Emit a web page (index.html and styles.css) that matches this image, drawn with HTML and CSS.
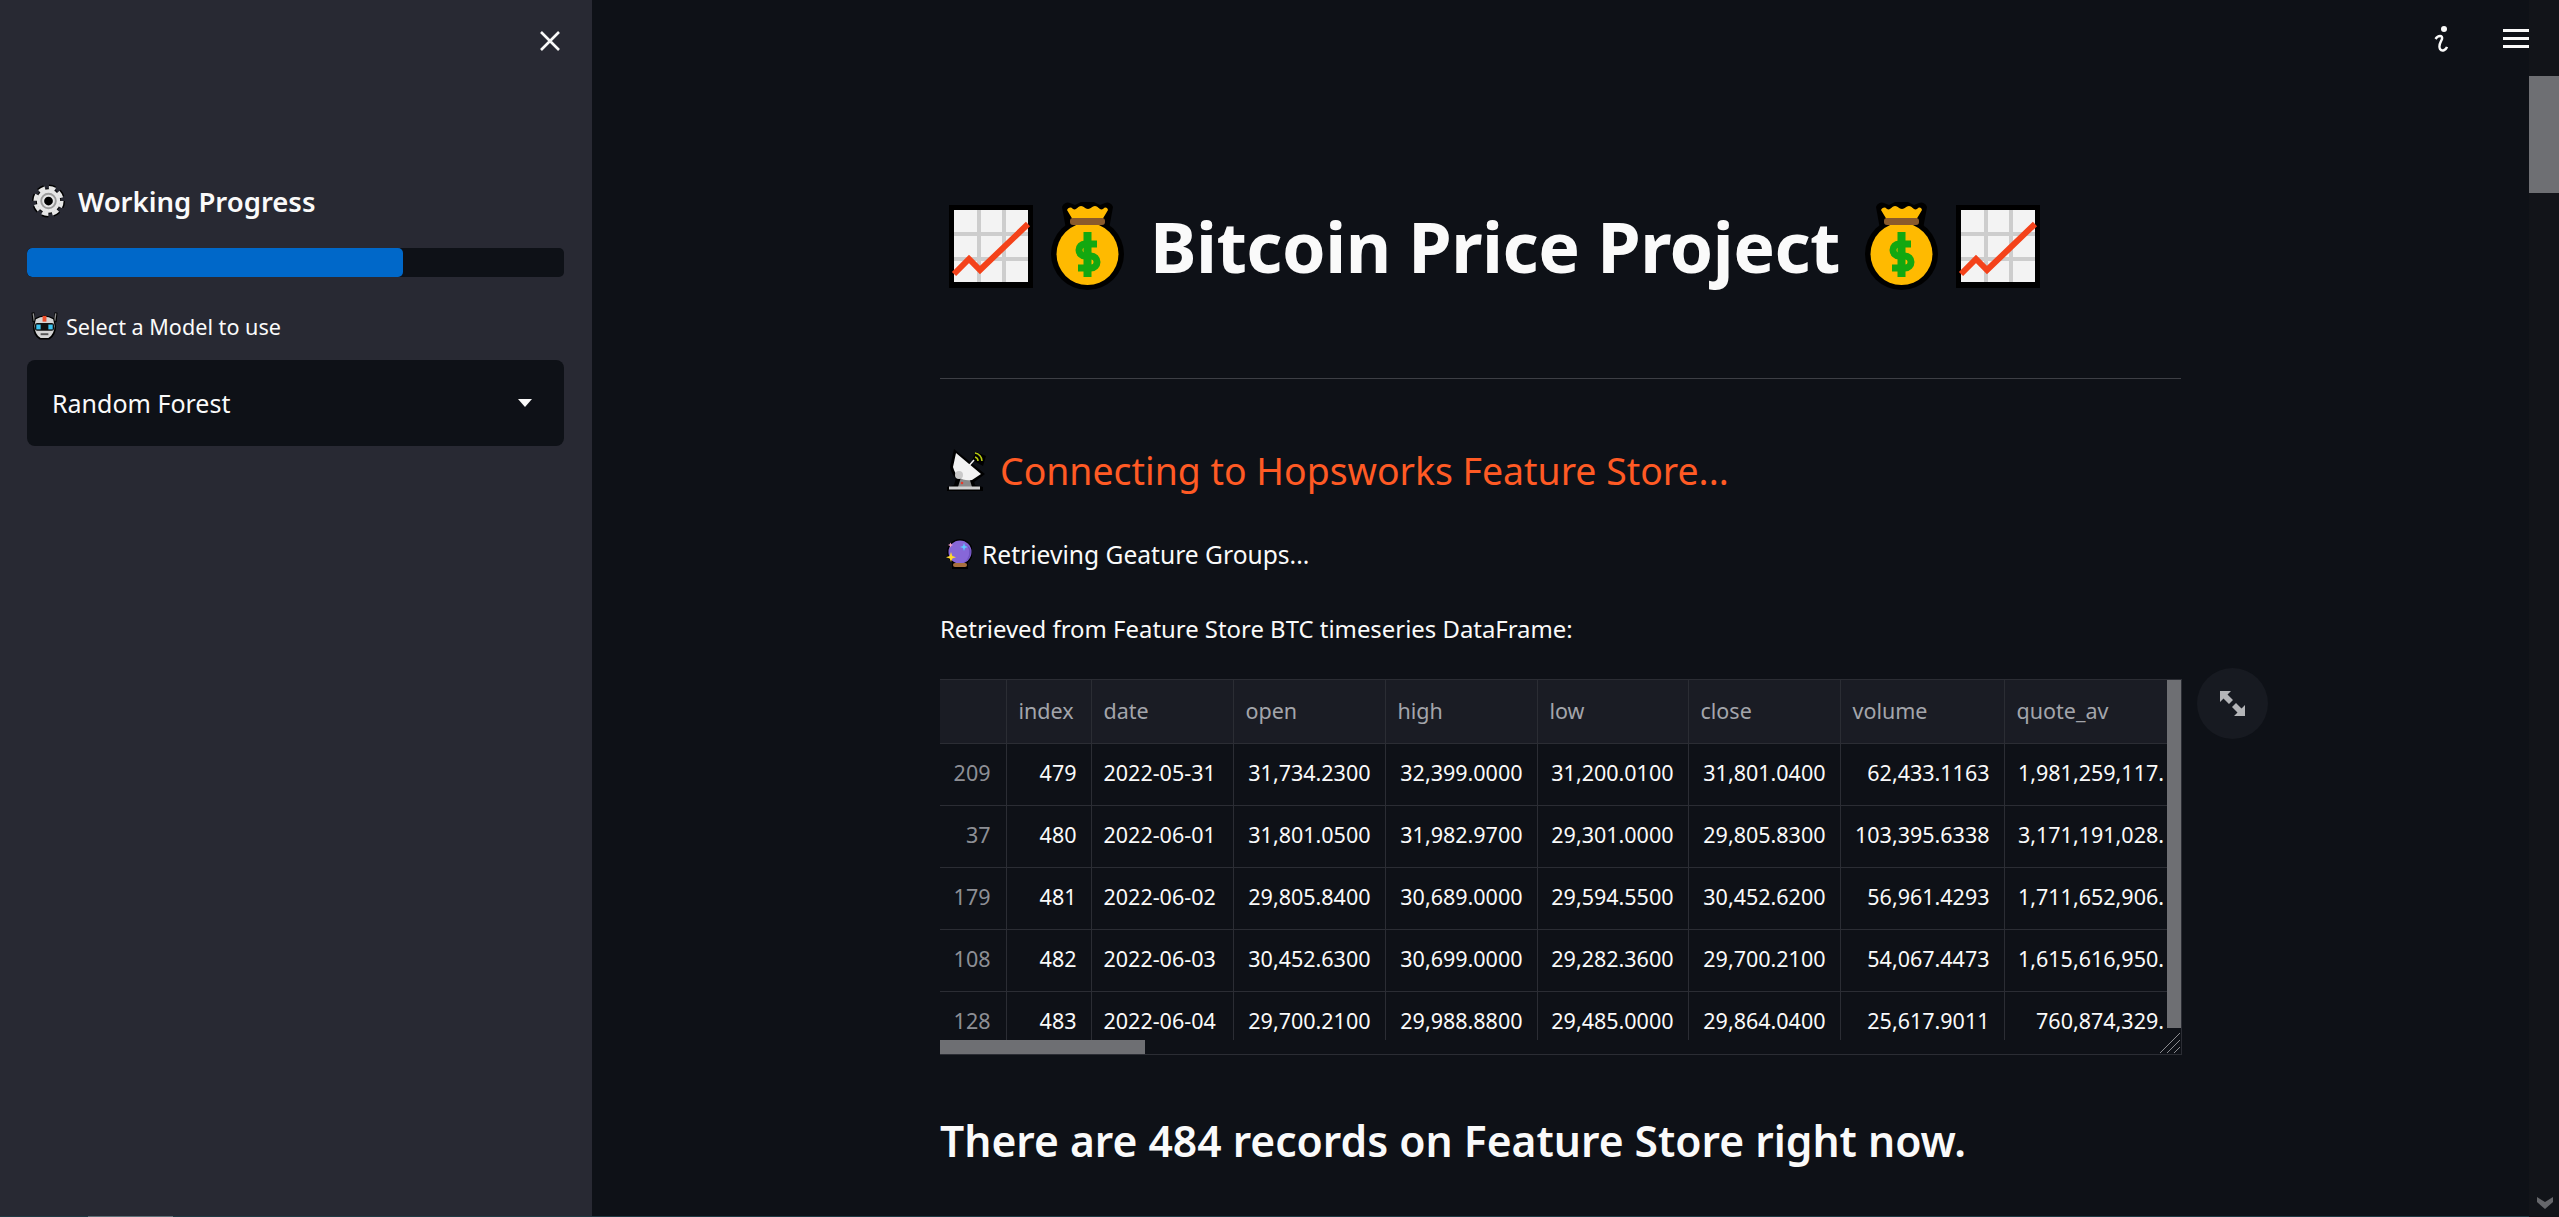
FILE: index.html
```html
<!DOCTYPE html>
<html lang="en">
<head>
<meta charset="utf-8">
<title>Bitcoin Price Project</title>
<link rel="stylesheet" href="styles.css">
</head>
<body>
<svg class="defs" width="0" height="0" aria-hidden="true">
  <symbol id="chart" viewBox="0 0 84 83">
    <rect width="84" height="83" fill="#000"/>
    <rect x="5" y="5" width="74" height="72" fill="#f3f3f3"/>
    <path d="M5 29H79M5 54H79M30 5V77M55 5V77" stroke="#cdcdcd" stroke-width="4" fill="none"/>
    <path d="M5 69L20 54L31 65L79 19" stroke="#f4421a" stroke-width="6" fill="none"/>
  </symbol>
  <symbol id="bag" viewBox="0 0 73 88">
    <ellipse cx="36.500" cy="52" rx="36.500" ry="36" fill="#000"/>
    <path d="M11 5a6 6 0 0 1 8-4l5 2 6-3h13l6 3 5-2a6 6 0 0 1 8 4l-4 22H15z" fill="#000"/>
    <ellipse cx="36.500" cy="52" rx="31" ry="31" fill="#ffba00"/>
    <path d="M16 8c2-3 4-3 6-1 3 2 5-3 8-3s4 3 7 3 4-3 7-3 5 5 8 3c2-2 4-2 5 1l-6 10H22z" fill="#ffba00"/>
    <rect x="19" y="16" width="35" height="7" rx="3" fill="#8a5a2b"/>
    <path d="M46 42H34a5.500 5.500 0 0 0 0 12h6a5.500 5.500 0 0 1 0 12H27" stroke="#13a810" stroke-width="7" fill="none"/>
    <rect x="32.500" y="30" width="8" height="45" fill="#13a810"/>
  </symbol>
  <symbol id="gear" viewBox="0 0 36 34">
    <circle cx="18" cy="17" r="14" fill="none" stroke="#000" stroke-width="6" stroke-dasharray="6 5"/>
    <circle cx="18" cy="17" r="13" fill="#000"/>
    <circle cx="18" cy="17" r="13.500" fill="none" stroke="#e6e6e6" stroke-width="4" stroke-dasharray="6.600 4"/>
    <circle cx="18" cy="17" r="12" fill="#e6e6e6"/>
    <circle cx="18" cy="17" r="7.500" fill="#e6e6e6" stroke="#9c9c9c" stroke-width="2"/>
    <circle cx="18" cy="17" r="4.500" fill="#000"/>
  </symbol>
  <symbol id="robot" viewBox="0 0 28 28">
    <path d="M2 0L3 10M26 0L25 10" stroke="#000" stroke-width="3"/>
    <path d="M2.300 1L3.500 9M25.700 1L24.500 9" stroke="#8c8c8c" stroke-width="1.400"/>
    <path d="M4 6Q14 0 24 6L26 14Q26 24 19 28H9Q2 24 2 14Z" fill="#000"/>
    <path d="M5 7Q14 2 23 7L24.500 14Q24 23 18 26.500H10Q4 23 3.500 14Z" fill="#d4d4d4"/>
    <rect x="12" y="3.500" width="4" height="6" fill="#f0502c"/>
    <rect x="4" y="11" width="20" height="8" rx="2.500" fill="#111"/>
    <rect x="5.500" y="12.500" width="4.500" height="5" fill="#3cc3f0"/>
    <rect x="18" y="12.500" width="4.500" height="5" fill="#3cc3f0"/>
    <rect x="10" y="21.500" width="8" height="2" fill="#555"/>
  </symbol>
  <symbol id="dish" viewBox="0 0 42 46">
    <path d="M2 44V40L9 38L12 27H27L30 38L38 40V44Z" fill="#000"/>
    <path d="M9 2L40 27L28 36Q9 38 5 20Z" fill="#000"/>
    <path d="M27 13L31 5L41 9L38 19Z" fill="#000"/>
    <path d="M13 40L16 30H24L27 40Z" fill="#8a8a8a"/>
    <rect x="4" y="39.500" width="31" height="3" fill="#d0d0d0"/>
    <path d="M11 6L36 27L27 33Q12 35 8 20Z" fill="#f2f2f2"/>
    <circle cx="14" cy="28" r="4" fill="#c9c9c9"/>
    <circle cx="17" cy="36" r="1.300" fill="#e8392a"/>
    <path d="M22 21L29 13" stroke="#f2f2f2" stroke-width="1.500"/>
    <path d="M30 10a4 4 0 0 1 3 4M30 6a8 8 0 0 1 7 8" stroke="#b9cc10" stroke-width="1.500" fill="none"/>
  </symbol>
  <symbol id="ball" viewBox="0 0 26 30">
    <circle cx="14" cy="13" r="13" fill="#000"/>
    <path d="M6 30V23H22V30Z" fill="#000"/>
    <circle cx="14" cy="13" r="11.500" fill="#8767d8"/>
    <path d="M19 5a11 11 0 0 1-3 19a11.500 11.500 0 0 0 9-11c0-3-2-6-6-8" fill="#6f52bf"/>
    <rect x="7" y="24" width="14" height="4" rx="2" fill="#a8703f"/>
    <path d="M5 13L6.300 17L10 18.300L6.300 19.500L5 23L3.700 19.500L0 18.300L3.700 17Z" fill="#ffd92e"/>
    <path d="M18 4L19 7L22 8L19 9L18 12L17 9L14 8L17 7Z" fill="#5fc8ff"/>
    <path d="M4.500 3.500L5.300 5.200L7 6L5.300 6.800L4.500 8.500L3.700 6.800L2 6L3.700 5.200Z" fill="#f4a0c8"/>
  </symbol>
</svg>

<div class="app">
  <aside class="sidebar">
    <div class="side-top">
      <button class="icon-btn" aria-label="Close sidebar">
        <svg class="close-ico" viewBox="0 0 20 20"><path d="M1 1L19 19M19 1L1 19" stroke="#fafafa" stroke-width="2.600"/></svg>
      </button>
    </div>
    <h3 class="side-title"><svg class="ico-gear"><use href="#gear"/></svg><span>Working Progress</span></h3>
    <div class="progress"><div class="progress-fill" style="width:70%"></div></div>
    <label class="field-label"><svg class="ico-robot"><use href="#robot"/></svg><span>Select a Model to use</span></label>
    <div class="select">
      <span>Random Forest</span>
      <svg class="caret" viewBox="0 0 14 8"><path d="M0 0H14L7 8Z" fill="#fafafa"/></svg>
    </div>
  </aside>

  <main class="main">
    <header class="toolbar">
      <svg class="info-ico" viewBox="0 0 14 26"><circle cx="10" cy="3" r="3" fill="#fafafa"/><path d="M1.500 13C4 9 9 9 8 13C7 16 4 19 6 23C8 26 12 24 13 21" stroke="#fafafa" stroke-width="2.400" fill="none"/></svg>
      <svg class="menu-ico" viewBox="0 0 27 19"><path d="M0 1.500H27M0 9.500H27M0 17.500H27" stroke="#fafafa" stroke-width="3"/></svg>
    </header>
    <div class="content">
      <h1 class="title">
        <svg class="ico-chart"><use href="#chart"/></svg>
        <svg class="ico-bag"><use href="#bag"/></svg>
        <span>Bitcoin Price Project</span>
        <svg class="ico-bag"><use href="#bag"/></svg>
        <svg class="ico-chart"><use href="#chart"/></svg>
      </h1>
      <hr class="rule">
      <h3 class="status"><svg class="ico-dish"><use href="#dish"/></svg><span>Connecting to Hopsworks Feature Store...</span></h3>
      <p class="line line-ball"><svg class="ico-ball"><use href="#ball"/></svg><span>Retrieving Geature Groups...</span></p>
      <p class="line line-plain">Retrieved from Feature Store BTC timeseries DataFrame:</p>
      <div class="frame-wrap">
        <div class="frame">
          <table class="grid">
            <colgroup>
              <col class="c-row"><col class="c-index"><col class="c-date"><col class="c-num"><col class="c-num"><col class="c-low"><col class="c-num"><col class="c-vol"><col class="c-quote">
            </colgroup>
            <thead>
              <tr><th></th><th>index</th><th>date</th><th>open</th><th>high</th><th>low</th><th>close</th><th>volume</th><th>quote_av</th></tr>
            </thead>
            <tbody>
              <tr><td class="rowid">209</td><td>479</td><td class="l">2022-05-31</td><td>31,734.2300</td><td>32,399.0000</td><td>31,200.0100</td><td>31,801.0400</td><td>62,433.1163</td><td class="q">1,981,259,117.</td></tr>
              <tr><td class="rowid">37</td><td>480</td><td class="l">2022-06-01</td><td>31,801.0500</td><td>31,982.9700</td><td>29,301.0000</td><td>29,805.8300</td><td>103,395.6338</td><td class="q">3,171,191,028.</td></tr>
              <tr><td class="rowid">179</td><td>481</td><td class="l">2022-06-02</td><td>29,805.8400</td><td>30,689.0000</td><td>29,594.5500</td><td>30,452.6200</td><td>56,961.4293</td><td class="q">1,711,652,906.</td></tr>
              <tr><td class="rowid">108</td><td>482</td><td class="l">2022-06-03</td><td>30,452.6300</td><td>30,699.0000</td><td>29,282.3600</td><td>29,700.2100</td><td>54,067.4473</td><td class="q">1,615,616,950.</td></tr>
              <tr><td class="rowid">128</td><td>483</td><td class="l">2022-06-04</td><td>29,700.2100</td><td>29,988.8800</td><td>29,485.0000</td><td>29,864.0400</td><td>25,617.9011</td><td class="q">760,874,329.</td></tr>
            </tbody>
          </table>
          <div class="thumb-v"></div>
          <div class="thumb-h"></div>
          <svg class="resize" viewBox="0 0 20 20"><path d="M0 20L20 0M7 20L20 7M14 20L20 14" stroke="#8a8b8f" stroke-width="1"/></svg>
        </div>
        <button class="expand" aria-label="View fullscreen">
          <svg viewBox="0 0 25 25"><path d="M0 0H11L7.500 3.500L13 9L9 13L3.500 7.500L0 11ZM25 25H14L17.500 21.500L12 16L16 12L21.500 17.500L25 14Z" fill="#b4b5b8"/></svg>
        </button>
      </div>
      <h2 class="records">There are 484 records on Feature Store right now.</h2>
    </div>
  </main>

  <div class="page-scroll">
    <div class="page-thumb"></div>
    <svg class="chev" viewBox="0 0 16 12"><path d="M0 0L8 5L16 0V5L8 12L0 5Z" fill="#66676b"/></svg>
  </div>
</div>
<div class="hbar"><div class="hbar-thumb"></div></div>
</body>
</html>
```

FILE: styles.css
```css
* { box-sizing: border-box; }
html, body { margin: 0; height: 100%; overflow: hidden; }
body {
  background: #0e1117;
  color: #fafafa;
  font-family: "Noto Sans", "Open Sans", sans-serif;
  position: relative;
}
.defs { position: absolute; }
.app { display: flex; height: 1217px; }

/* sidebar */
.sidebar {
  width: 592px;
  flex: none;
  background: #282933;
  padding: 0 28px 0 27px;
  display: flex;
  flex-direction: column;
}
.side-top { height: 184px; display: flex; justify-content: flex-end; align-items: flex-start; padding-top: 31px; }
.icon-btn { background: none; border: 0; padding: 0; width: 20px; height: 20px; margin-right: 4px; display: block; }
.close-ico { display: block; width: 20px; height: 20px; }
.side-title { margin: 0; height: 34px; display: flex; align-items: center; font-size: 27.500px; font-weight: 600; padding-left: 4px; gap: 12px; }
.ico-gear { width: 35px; height: 34px; flex: none; }
.progress { margin-top: 30px; height: 29px; background: #0e1117; border-radius: 5px; width: 537px; overflow: hidden; }
.progress-fill { height: 100%; background: #0068c9; border-radius: 5px; }
.field-label { margin-top: 35px; height: 28px; display: flex; align-items: center; font-size: 21.600px; padding-left: 4px; gap: 8px; }
.ico-robot { width: 27px; height: 28px; flex: none; }
.select {
  margin-top: 20px;
  width: 537px;
  height: 86px;
  background: #0e1117;
  border-radius: 8px;
  display: flex;
  align-items: center;
  justify-content: space-between;
  padding: 0 32px 0 25px;
  font-size: 25px;
}
.caret { width: 14px; height: 8px; }

/* main column */
.main { flex: 1; min-width: 0; position: relative; }
.toolbar { position: absolute; top: 0; left: 0; right: 0; height: 60px; }
.info-ico { position: absolute; left: 1842px; top: 26px; width: 14px; height: 26px; }
.menu-ico { position: absolute; left: 1911px; top: 29px; width: 27px; height: 19px; }
.content { width: 1241px; margin-left: 348px; padding-top: 202px; }

.title { margin: 0; height: 88px; display: flex; align-items: center; font-size: 70px; font-weight: 700; padding-left: 9px; white-space: nowrap; line-height: 88px; letter-spacing: -0.5px; }
.ico-chart { width: 84px; height: 83px; flex: none; }
.ico-bag { width: 73px; height: 88px; flex: none; margin-left: 18px; }
.title span { margin: 0 25px 0 26px; }
.title span + .ico-bag { margin-left: 0; }
.title .ico-bag + .ico-chart { margin-left: 18px; }
.rule { border: 0; height: 1px; background: #3d3f45; margin: 88px 0 0; }

.status { margin: 68px 0 0; height: 46px; display: flex; align-items: center; font-size: 37.400px; font-weight: 400; color: #ff5a24; padding-left: 5px; gap: 13px; }
.ico-dish { width: 42px; height: 46px; flex: none; }
.line { margin: 0; display: flex; align-items: center; font-size: 23.900px; }
.line-ball { margin-top: 46px; height: 30px; padding-left: 6px; gap: 10px; font-size: 24.600px; }
.ico-ball { width: 26px; height: 30px; flex: none; }
.line-plain { margin-top: 44px; height: 30px; }

/* data frame */
.frame-wrap { margin-top: 36px; position: relative; }
.frame {
  width: 1242px;
  height: 376px;
  position: relative;
  overflow: hidden;
  border-bottom: 1px solid #2b2d34;
  border-right: 1px solid #2b2d34;
  border-top: 1px solid #2b2d34;
}
.grid { border-collapse: collapse; table-layout: fixed; width: 1227px; font-size: 21.500px; }
.c-row { width: 66px; }
.c-index { width: 85px; }
.c-date { width: 142px; }
.c-num { width: 152px; }
.c-low { width: 151px; }
.c-vol { width: 164px; }
.c-quote { width: 163px; }
.grid th {
  height: 63px;
  background: #1a1c24;
  color: #a3a5ab;
  font-weight: 400;
  text-align: left;
  padding: 0 12px 2px;
  border-right: 1px solid #2b2d34;
  border-bottom: 1px solid #2b2d34;
}
.grid td {
  height: 62px;
  text-align: right;
  padding: 0 14px 3px 0;
  border-right: 1px solid #2b2d34;
  border-bottom: 1px solid #2b2d34;
  white-space: nowrap;
  overflow: hidden;
  vertical-align: middle;
}
.grid td.rowid { color: #8d8f95; padding-right: 15px; }
.grid td.l { text-align: left; padding: 0 0 3px 12px; }
.grid td.q { border-right: 0; padding: 0 3px 3px 0; }
.grid th:last-child { border-right: 0; }
.thumb-v { position: absolute; top: 0; right: 0; width: 14px; height: 348px; background: #6e6f73; }
.thumb-h { position: absolute; left: 0; bottom: 0; width: 205px; height: 14px; background: #6e6f73; }
.frame::after { content: ""; position: absolute; left: 0; right: 0; bottom: 0; height: 14px; background: #0e1117; z-index: 0; }
.thumb-h, .resize { z-index: 1; }
.resize { position: absolute; right: 1px; bottom: 1px; width: 20px; height: 20px; }
.expand {
  position: absolute;
  left: 1257px;
  top: -11px;
  width: 71px;
  height: 71px;
  border-radius: 50%;
  background: #171a21;
  border: 0;
  padding: 0;
  display: flex;
  align-items: center;
  justify-content: center;
}
.expand svg { width: 25px; height: 25px; }

.records { margin: 55px 0 0; font-size: 42.600px; font-weight: 600; line-height: 60px; white-space: nowrap; }

/* page scrollbar */
.page-scroll { width: 30px; flex: none; background: #121419; position: relative; padding-top: 76px; }
.page-thumb { height: 117px; background: #6e6f73; }
.chev { position: absolute; left: 8px; bottom: 8px; width: 16px; height: 12px; }
.hbar { position: absolute; left: 0; right: 30px; bottom: 0; height: 1px; background: #1f3a44; }
.hbar-thumb { margin-left: 88px; width: 85px; height: 1px; background: #5d7078; }
```
